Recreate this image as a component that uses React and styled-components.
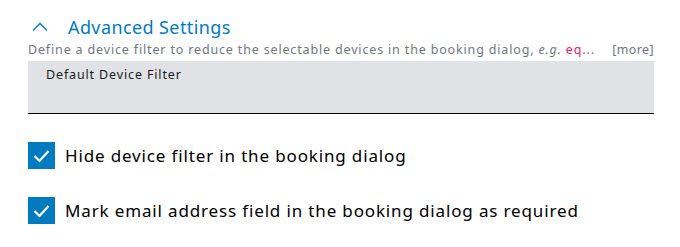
import React from "react";
import styled, { createGlobalStyle } from "styled-components";

const GlobalStyle = createGlobalStyle`
  body {
    margin: 0;
    background: #ffffff;
    font-family: "Noto Sans", "Open Sans", sans-serif;
  }
`;

const Page = styled.div`
  width: 626px;
  padding: 15px 0 0 28px;
`;

const Header = styled.button`
  display: flex;
  align-items: center;
  gap: 20px;
  padding: 0 0 0 4px;
  border: none;
  background: none;
  height: 24px;
  cursor: pointer;
  font-family: inherit;
`;

const Title = styled.span`
  font-size: 18px;
  letter-spacing: 0.4px;
  color: #007bc0;
  line-height: 24px;
`;

const Hint = styled.div`
  display: flex;
  justify-content: space-between;
  font-size: 12.5px;
  letter-spacing: 0.84px;
  line-height: 22px;
  color: #71767c;
  white-space: nowrap;
`;

const Example = styled.span`
  color: #e0246e;
`;

const More = styled.span`
  color: #71767c;
  letter-spacing: 0.4px;
  cursor: pointer;
`;

const FilterField = styled.div`
  height: 53px;
  background: #e0e2e5;
  border-bottom: 1px solid #000000;
  padding: 5px 18px 0;
  box-sizing: border-box;
  font-size: 12.5px;
  letter-spacing: 0.86px;
  line-height: 18px;
  color: #1a1c1d;
`;

const Options = styled.div`
  display: flex;
  flex-direction: column;
  gap: 28px;
  margin-top: 28px;
`;

const Option = styled.label`
  display: flex;
  align-items: center;
  gap: 10px;
  font-size: 17px;
  letter-spacing: 0.85px;
  color: #000000;
`;

const Box = styled.span`
  width: 27px;
  height: 27px;
  background: #007bc0;
  display: flex;
  align-items: center;
  justify-content: center;
  flex-shrink: 0;
`;

function Chevron() {
  return (
    <svg width="16" height="10" viewBox="0 0 16 10">
      <path d="M1 8.5 L8 1.5 L15 8.5" fill="none" stroke="#007bc0" strokeWidth="1.5" />
    </svg>
  );
}

function Check() {
  return (
    <svg width="17" height="14" viewBox="0 0 17 14">
      <path d="M1.5 7 L6.5 12 L15.5 2" fill="none" stroke="#ffffff" strokeWidth="2.2" />
    </svg>
  );
}

function Checkbox({ label }) {
  return (
    <Option>
      <Box>
        <Check />
      </Box>
      {label}
    </Option>
  );
}

export default function App() {
  return (
    <Page>
      <GlobalStyle />
      <Header>
        <Chevron />
        <Title>Advanced Settings</Title>
      </Header>
      <Hint>
        <span>
          Define a device filter to reduce the selectable devices in the booking dialog, <i>e.g.</i>{" "}
          <Example>eq</Example>...
        </span>
        <More>[more]</More>
      </Hint>
      <FilterField>Default Device Filter</FilterField>
      <Options>
        <Checkbox label="Hide device filter in the booking dialog" />
        <Checkbox label="Mark email address field in the booking dialog as required" />
      </Options>
    </Page>
  );
}
